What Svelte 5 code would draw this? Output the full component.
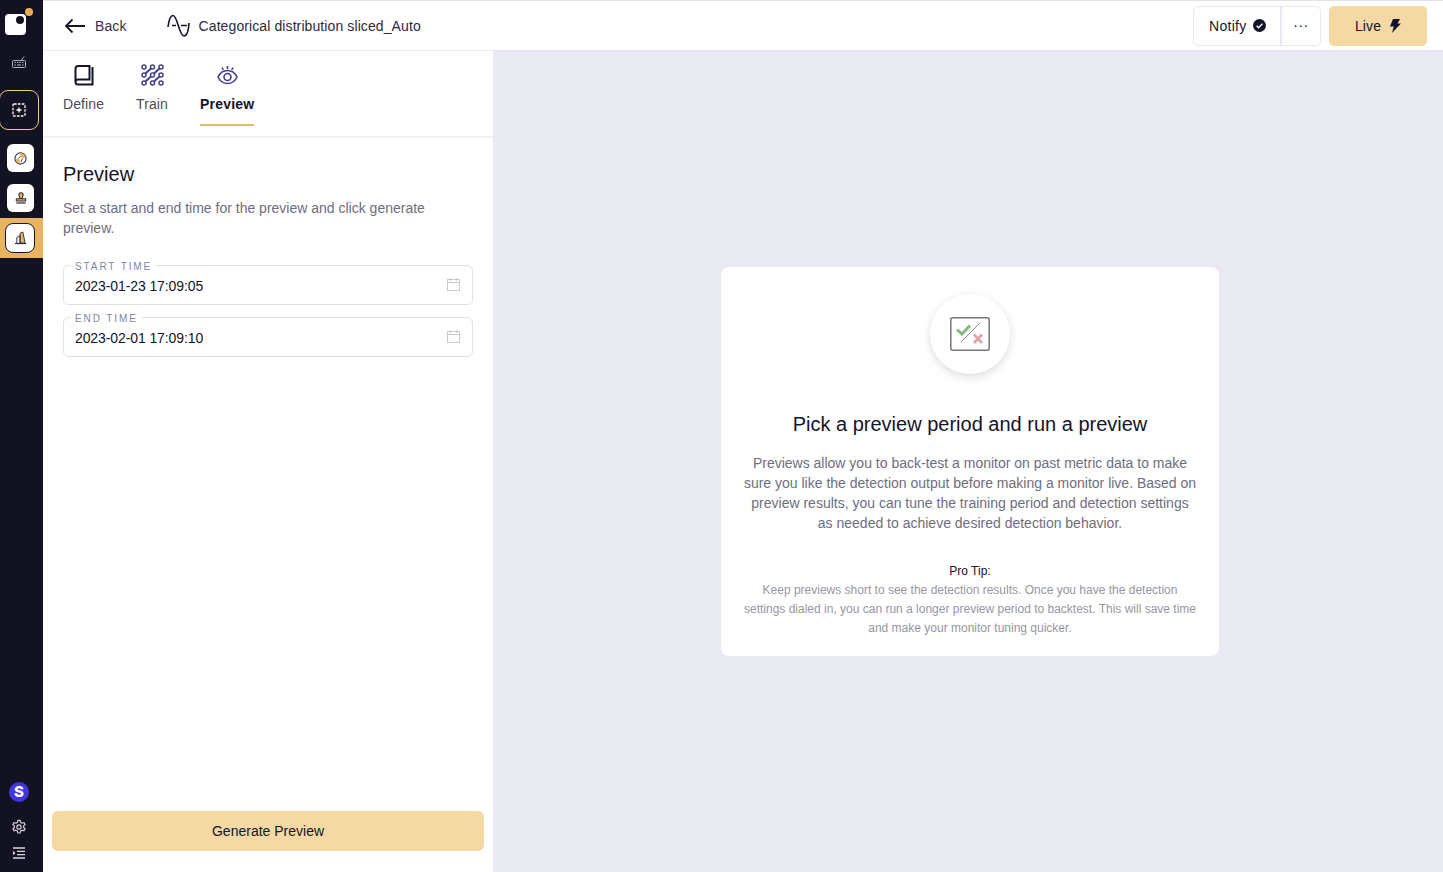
<script lang="ts">
  let tabs = ['Define', 'Train', 'Preview']
  let fields = [
    { label: 'START TIME', value: '2023-01-23 17:09:05' },
    { label: 'END TIME', value: '2023-02-01 17:09:10' },
  ]
</script>

<div class="page">
  <aside class="rail">
    <div class="logo">
      <span class="logo-hole"></span>
      <span class="logo-dot"></span>
    </div>
    <div class="rail-key">
      <svg width="14" height="12" viewBox="0 0 14 12" fill="none" stroke="#b5b5bd" stroke-width="1">
        <rect x=".5" y="4.500" width="13" height="7" rx="1" />
        <path d="M2.500 6.500h1.500M5 6.500h1.500M7.500 6.500h1.500M10 6.500h1.500M2.500 9h1.500M5 9h4M10 9h1.500M10 4.500V3c0-.8.6-.8 1-1s1-.4 1-1.500" />
      </svg>
    </div>
    <div class="rail-new">
      <svg width="14" height="14" viewBox="0 0 14 14" fill="none" stroke="#fff" stroke-width="1.300">
        <rect x="1" y="1" width="12" height="12" rx="1" stroke-dasharray="2.600 1.300" />
        <path d="M7 4.500v5M4.500 7h5" />
      </svg>
    </div>
    <div class="rail-tile first">
      <svg width="13" height="13" viewBox="0 0 14 14">
        <circle cx="7" cy="7" r="6" fill="#fff" stroke="#3a3a48" stroke-width="1.300" />
        <path d="M6 1.500c3-.5 6 1.500 6.500 4.500L9 7 7 4.500z" fill="#e9b45f" />
        <path d="M1.500 8 5 6.800 6.500 9.500 5.500 12.500A6 6 0 0 1 1.500 8z" fill="#e9b45f" />
        <path d="M7 4.500 5 6.800M9 7 7.500 11" stroke="#3a3a48" stroke-width="1" fill="none" />
      </svg>
    </div>
    <div class="rail-tile">
      <svg width="12" height="12" viewBox="0 0 14 14">
        <path d="M4.500 3.500a2.500 2.500 0 0 1 5 0c0 1.200-.8 1.800-1 2.500v2h-3V6c-.2-.7-1-1.300-1-2.500z" fill="#e9b45f" stroke="#2a2a38" stroke-width="1.200" />
        <rect x="1.500" y="8" width="11" height="2.600" rx=".6" fill="#e9b45f" stroke="#2a2a38" stroke-width="1.200" />
        <path d="M1.500 12.800h11" stroke="#2a2a38" stroke-width="1.400" />
      </svg>
    </div>
    <div class="rail-active">
      <div class="rail-tile current">
        <svg width="13" height="14" viewBox="0 0 14 15" fill="none">
          <path d="M6.500 2.500 9.500 1 12 13H6.500z" fill="#e9b45f" stroke="#2a2a38" stroke-width="1" />
          <path d="M3 13V7l3.500-2v8" stroke="#2a2a38" stroke-width="1" />
          <path d="M1 13.500h12" stroke="#2a2a38" stroke-width="1.200" />
        </svg>
      </div>
    </div>
    <div class="rail-bottom">
      <div class="avatar">S</div>
      <svg class="gear" width="16" height="16" viewBox="0 0 24 24" fill="none" stroke="#d8d8de" stroke-width="1.700">
        <circle cx="12" cy="12" r="3.200" />
        <path d="M10.300 2h3.400l.6 3 2.300 1.300 2.900-1 1.700 3-2.300 2v2.400l2.300 2-1.700 3-2.900-1-2.300 1.300-.6 3h-3.400l-.6-3-2.300-1.300-2.900 1-1.700-3 2.300-2v-2.400l-2.300-2 1.700-3 2.900 1 2.300-1.300z" stroke-linejoin="round" />
      </svg>
      <svg class="collapse" width="14" height="12" viewBox="0 0 14 12" fill="none" stroke="#d8d8de" stroke-width="1.300">
        <path d="M1 1h12M5 4.300h8M5 7.600h8M1 11h12" />
        <path d="M1 3.800 3.400 6 1 8.200z" fill="#d8d8de" stroke="none" />
      </svg>
    </div>
  </aside>

  <div class="main">
    <header class="topbar">
      <div class="back">
        <svg width="22" height="16" viewBox="0 0 22 16" fill="none" stroke="#14142b" stroke-width="1.800">
          <path d="M21 8H2M8.500 1.500 2 8l6.500 6.500" />
        </svg>
        <span>Back</span>
      </div>
      <svg class="wave" width="24" height="24" viewBox="0 0 24 24" fill="none" stroke="#14142b" stroke-width="1.600">
        <path d="M1 13C2 5 3.500 1.500 6 1.500c4.500 0 6 20.500 11 20.500 3.500 0 4.500-5 5-13" />
        <path d="M5 11.500h4M14 11.500h6" />
      </svg>
      <span class="name">Categorical distribution sliced_Auto</span>
      <div class="actions">
        <div class="notify-group">
          <div class="notify">
            Notify
            <svg width="13" height="13" viewBox="0 0 13 13">
              <circle cx="6.500" cy="6.500" r="6.500" fill="#14142b" />
              <path d="M3.600 6.800 5.600 8.800 9.400 4.800" fill="none" stroke="#fff" stroke-width="1.300" />
            </svg>
          </div>
          <div class="more">···</div>
        </div>
        <div class="live">
          Live
          <svg width="12" height="14" viewBox="0 0 12 14">
            <path d="M4 0h7L8.500 4.500H12L3 14l1.800-6.500H1z" fill="#14142b" />
          </svg>
        </div>
      </div>
    </header>

    <div class="body">
      <section class="panel">
        <nav class="tabs">
          {#each tabs as tab}
            <div class="tab" class:selected={tab === 'Preview'}>
              <div class="tab-icon">
                {#if tab === 'Define'}
                  <svg width="20" height="21" viewBox="0 0 20 21" fill="none" stroke="#14142b" stroke-width="2">
                    <path d="M18.500 2v17.500H4a2.500 2.500 0 0 1-2.500-2.500V3.500A2.500 2.500 0 0 1 4 1h11.500v13.500H4a2.500 2.500 0 0 0-2.500 2.500" />
                  </svg>
                {:else if tab === 'Train'}
                  <svg width="23" height="22" viewBox="0 0 23 22" fill="none" stroke="#46408f" stroke-width="1.500">
                    <circle cx="3" cy="3" r="2" /><circle cx="11.500" cy="3" r="2" /><circle cx="20" cy="3" r="2" />
                    <circle cx="3" cy="11" r="2" /><circle cx="11.500" cy="11" r="2" /><circle cx="20" cy="11" r="2" />
                    <circle cx="3" cy="19" r="2" /><circle cx="11.500" cy="19" r="2" /><circle cx="20" cy="19" r="2" />
                    <path d="M4.500 9.500 10 4.500M13 9.500 18.500 4.500M4.500 17.500 10 12.500M13 17.500 18.500 12.500" stroke-width="2" />
                  </svg>
                {:else}
                  <svg width="21" height="20" viewBox="0 0 21 20" fill="none" stroke="#46408f" stroke-width="1.600">
                    <path d="M1 12c2-4.500 5.500-6.500 9.500-6.500S18 7.500 20 12c-2 4.500-5.500 6.500-9.500 6.500S3 16.500 1 12z" />
                    <circle cx="10.500" cy="12" r="3.500" />
                    <path d="M10.500 1v3M5 2.500 6.200 5M16 2.500 14.800 5" />
                  </svg>
                {/if}
              </div>
              <span class="tab-label">{tab}</span>
            </div>
          {/each}
        </nav>

        <div class="form">
          <h1>Preview</h1>
          <p>Set a start and end time for the preview and click generate preview.</p>
          {#each fields as field}
            <fieldset class="field">
              <legend>{field.label}</legend>
              <span>{field.value}</span>
              <svg width="13" height="13" viewBox="0 0 13 13" fill="none" stroke="#c9c9cf" stroke-width="1">
                <rect x=".5" y="1.500" width="12" height="11" />
                <path d="M.5 4.500h12M3.500 0v3M9.500 0v3" />
              </svg>
            </fieldset>
          {/each}
        </div>

        <div class="generate">Generate Preview</div>
      </section>

      <section class="canvas">
        <div class="card">
          <div class="badge">
            <svg width="40" height="34" viewBox="0 0 40 34" fill="none">
              <rect x=".8" y=".8" width="38.400" height="32.400" rx="2" stroke="#777" stroke-width="1.500" />
              <path d="M11 25 30 6" stroke="#8a8a8a" stroke-width="1" />
              <path d="M7 12.500 12 17 20 8.500" stroke="#83b883" stroke-width="3" />
              <path d="M24 17.500 32 26M32 17.500 24 26" stroke="#dfa3a6" stroke-width="2.600" />
            </svg>
          </div>
          <h2>Pick a preview period and run a preview</h2>
          <p class="lead">
            Previews allow you to back-test a monitor on past metric data to make sure you like the detection output before making a monitor live. Based on preview results, you can tune the training period and detection settings as needed to achieve desired detection behavior.
          </p>
          <div class="tip-title">Pro Tip:</div>
          <p class="tip">
            Keep previews short to see the detection results. Once you have the detection settings dialed in, you can run a longer preview period to backtest. This will save time and make your monitor tuning quicker.
          </p>
        </div>
      </section>
    </div>
  </div>
</div>

<style>
  :global(body) {
    margin: 0;
    font-family: 'Liberation Sans', Arial, sans-serif;
    color: #14142b;
  }

  .page {
    display: flex;
    width: 1443px;
    height: 872px;
    overflow: hidden;
    background: #fff;
  }

  .rail {
    width: 43px;
    flex: none;
    background: #121223;
    display: flex;
    flex-direction: column;
    align-items: flex-start;
    box-sizing: border-box;
    padding-top: 14px;
  }

  .logo {
    position: relative;
    width: 21px;
    height: 21px;
    margin-left: 5px;
    background: #fff;
    border-radius: 4px;
  }

  .logo-hole {
    position: absolute;
    top: 2px;
    right: 2px;
    width: 8px;
    height: 8px;
    border-radius: 50%;
    background: #121223;
  }

  .logo-dot {
    position: absolute;
    top: -6px;
    right: -7px;
    width: 8px;
    height: 8px;
    border-radius: 50%;
    background: #e9ac55;
  }

  .rail-key {
    margin: 21px 0 0 12px;
    height: 12px;
    line-height: 0;
  }

  .rail-new {
    width: 40px;
    height: 40px;
    margin-left: -1px;
    margin-top: 22px;
    border: 1px solid #e9c987;
    border-radius: 9px;
    box-sizing: border-box;
    display: flex;
    align-items: center;
    justify-content: center;
  }

  .rail-tile {
    width: 27px;
    height: 28px;
    margin: 12px 0 0 7px;
    background: #fff;
    border-radius: 6px;
    display: flex;
    align-items: center;
    justify-content: center;
  }

  .rail-tile.first {
    margin-top: 14px;
  }

  .rail-active {
    width: 43px;
    height: 40px;
    margin-top: 6px;
    background: #e9b45f;
    display: flex;
    align-items: center;
    justify-content: center;
    padding-right: 3px;
    box-sizing: border-box;
  }

  .rail-tile.current {
    margin: 0;
    width: 30px;
    height: 30px;
    border: 1.500px solid #14142b;
    box-sizing: border-box;
    border-radius: 8px;
  }

  .rail-bottom {
    margin-top: auto;
    width: 38px;
    display: flex;
    flex-direction: column;
    align-items: center;
    padding-bottom: 13px;
  }

  .avatar {
    width: 20px;
    height: 20px;
    border-radius: 50%;
    background: #4336e0;
    color: #fff;
    font-family: Inter, sans-serif;
    font-weight: 800;
    font-size: 15px;
    line-height: 20px;
    text-align: center;
  }

  .gear {
    margin-top: 17px;
  }

  .collapse {
    margin-top: 12px;
  }

  .main {
    flex: 1;
    display: flex;
    flex-direction: column;
    min-width: 0;
  }

  .topbar {
    height: 51px;
    flex: none;
    box-sizing: border-box;
    border-top: 1px solid #e3e3e3;
    border-bottom: 1px solid #e8e8f0;
    padding: 0 16px 0 21px;
    display: flex;
    align-items: center;
    font-size: 14px;
    letter-spacing: 0.1px;
  }

  .back {
    display: flex;
    align-items: center;
    gap: 9px;
    color: #33334a;
  }

  .wave {
    margin-left: 40px;
  }

  .name {
    margin-left: 8px;
    color: #2a2a3e;
  }

  .actions {
    margin-left: auto;
    display: flex;
    gap: 8px;
  }

  .notify-group {
    display: flex;
    height: 40px;
    border: 1px solid #e8e8f0;
    border-radius: 5px;
    box-sizing: border-box;
  }

  .notify {
    width: 88px;
    box-sizing: border-box;
    padding-left: 15px;
    display: flex;
    align-items: center;
    gap: 6px;
    border-right: 2px solid #e8e8f0;
    letter-spacing: 0.3px;
  }

  .more {
    width: 38px;
    text-align: center;
    line-height: 36px;
    font-size: 14px;
    letter-spacing: 0.5px;
  }

  .live {
    width: 98px;
    height: 40px;
    background: #f4d9a4;
    border-radius: 5px;
    display: flex;
    align-items: center;
    justify-content: center;
    gap: 8px;
  }

  .body {
    flex: 1;
    display: flex;
    min-height: 0;
  }

  .panel {
    width: 450px;
    flex: none;
    display: flex;
    flex-direction: column;
    box-sizing: border-box;
  }

  .tabs {
    height: 87px;
    flex: none;
    box-sizing: border-box;
    border-bottom: 2px solid #f1f1f6;
    display: flex;
    gap: 32px;
    padding: 0 20px;
  }

  .tab {
    position: relative;
    display: flex;
    flex-direction: column;
    align-items: center;
    padding-top: 13px;
    font-size: 14px;
    letter-spacing: 0.1px;
    color: #4b4b5e;
  }

  .tab-icon {
    height: 22px;
    display: flex;
    align-items: center;
    justify-content: center;
  }

  .tab-label {
    margin-top: 8px;
    line-height: 20px;
  }

  .selected .tab-label {
    font-weight: 700;
    letter-spacing: 0.2px;
    color: #14142b;
  }

  .selected::after {
    content: '';
    position: absolute;
    left: 0;
    right: 0;
    bottom: 10px;
    height: 2px;
    background: #e9b86d;
  }

  .form {
    flex: 1;
    padding: 0 20px;
  }

  h1 {
    margin: 24px 0 0;
    font-size: 20px;
    font-weight: 400;
    line-height: 24px;
    color: #14142b;
  }

  .form p {
    margin: 12px 0 21px;
    font-size: 14px;
    line-height: 20px;
    color: #6e6e7e;
  }

  .field {
    position: relative;
    margin: 0 0 6px;
    padding: 0 11px;
    height: 46px;
    box-sizing: border-box;
    border: 1px solid #dfdfea;
    border-radius: 6px;
    display: block;
    font-size: 14px;
  }

  .field legend {
    position: relative;
    top: 2px;
    padding: 0 4px 0 4px;
    margin-left: -4px;
    font-size: 10px;
    line-height: 12px;
    letter-spacing: 1.9px;
    color: #7b879f;
  }

  .field span {
    line-height: 22px;
    display: block;
    margin-top: 4px;
    letter-spacing: -0.1px;
  }

  .field svg {
    position: absolute;
    right: 12px;
    top: 7px;
  }

  .generate {
    margin: 0 9px 21px;
    height: 40px;
    background: #f4d9a4;
    border-radius: 6px;
    font-size: 14px;
    line-height: 41px;
    text-align: center;
  }

  .canvas {
    flex: 1;
    background: #e9e9f2;
    display: flex;
    justify-content: center;
    padding: 216px 0 0 4px;
    box-sizing: border-box;
  }

  .card {
    width: 498px;
    height: 389px;
    box-sizing: border-box;
    background: #fff;
    border-radius: 8px;
    padding: 27px 20px 0;
    text-align: center;
  }

  .badge {
    width: 80px;
    height: 80px;
    margin: 0 auto;
    border-radius: 50%;
    background: #fff;
    box-shadow: 0 3px 10px rgba(0, 0, 0, 0.14);
    display: flex;
    align-items: center;
    justify-content: center;
  }

  h2 {
    margin: 36px 0 0;
    font-size: 20px;
    font-weight: 400;
    line-height: 28px;
    color: #14142b;
  }

  .lead {
    margin: 15px 2px 0;
    font-size: 14px;
    line-height: 20px;
    color: #6e6e7e;
  }

  .tip-title {
    margin-top: 29px;
    font-size: 12px;
    line-height: 19px;
    color: #14142b;
  }

  .tip {
    margin: 0;
    font-size: 12px;
    line-height: 19px;
    color: #96969f;
  }
</style>
